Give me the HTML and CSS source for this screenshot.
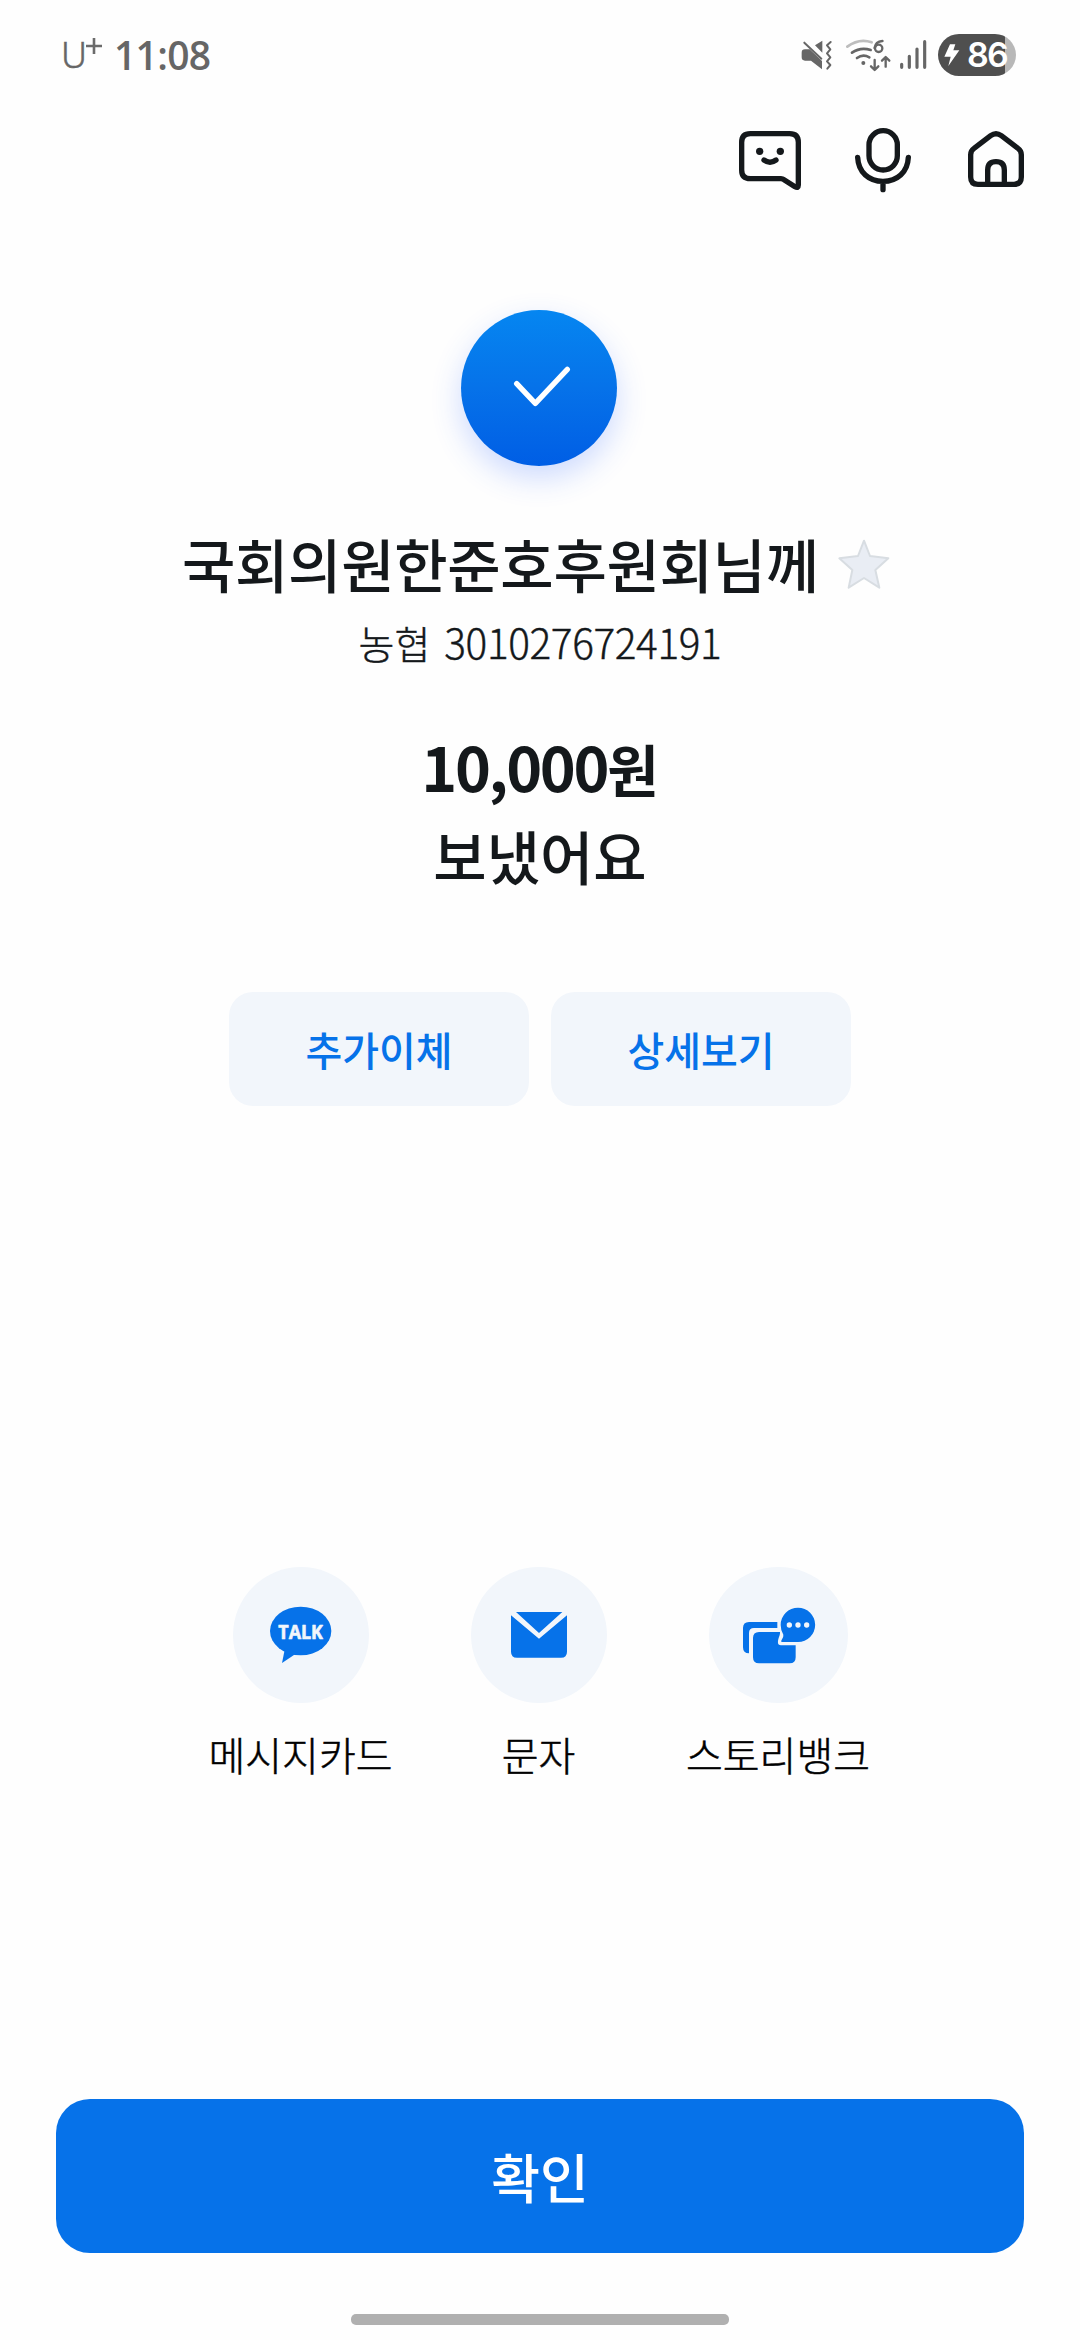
FILE: index.html
```html
<!DOCTYPE html>
<html lang="ko">
<head>
<meta charset="utf-8">
<title>이체 완료</title>
<link rel="stylesheet" href="styles.css">
</head>
<body>
<div class="screen">
  <div class="status">
    <div class="status-left"><span class="carrier">U</span><svg class="plus" viewBox="0 0 16 16"><path d="M8 0V16M0 8H16" fill="none" stroke="#6b6b6b" stroke-width="2.6"/></svg><span class="clock">11:08</span></div>
    <div class="status-right">
      <svg class="mute" viewBox="60 39 96 132"><path d="M62 98Q62 88 72 88H86L123 123V148L90 122H72Q62 122 62 112ZM102 76L124 62V98Z" fill="#666"/><path d="M70 68L121 116M149 66L138 76L148 88L138 100L148 112L138 124L148 135L139 146" fill="none" stroke="#666" stroke-width="6" stroke-linecap="round" stroke-linejoin="round"/></svg>
      <svg class="wifi" viewBox="192 39 138 132"><path d="M199 80Q234 54 272 67" fill="none" stroke="#bdbdbd" stroke-width="8" stroke-linecap="round"/><path d="M213 98Q239 80 269 90M228 114Q246 101 265 112M304 63Q284 64 281 84" fill="none" stroke="#666" stroke-width="8" stroke-linecap="round"/><circle cx="293" cy="85" r="11" fill="none" stroke="#666" stroke-width="7"/><circle cx="247" cy="129" r="6" fill="#666"/><path d="M281 120V148M270 139L281 150L292 139M314 140V112M303 122L314 111L325 122" fill="none" stroke="#666" stroke-width="7" stroke-linecap="round" stroke-linejoin="round"/></svg>
      <svg class="signal" viewBox="354 39 87 132"><path d="M362 133V142M385 109V142M408 87V142M431 65V142" fill="none" stroke="#666" stroke-width="9.500" stroke-linecap="round"/></svg>
      <div class="battery"><svg class="bolt" viewBox="489 72 48 66"><path d="M507 73H523L517 91H535L502 138L509 110H490Z" fill="#fff"/></svg><span class="level">86</span></div>
    </div>
  </div>

  <div class="toolbar">
    <svg class="chat" viewBox="54 51 192 201"><g fill="none" stroke="#14181b" stroke-width="16" stroke-linejoin="round" stroke-linecap="round"><path d="M91 71H209Q235 71 235 97V225Q235 236 225 230L192 209Q188 206 183 206H91Q65 206 65 180V97Q65 71 91 71Z"/><path d="M132 150Q150 163 168 150"/></g><circle cx="119" cy="124" r="11" fill="#14181b"/><circle cx="181" cy="124" r="11" fill="#14181b"/></svg>
    <svg class="mic" viewBox="402 51 174 201"><g fill="none" stroke="#14181b" stroke-width="16" stroke-linecap="round"><rect x="447" y="62" width="85" height="118" rx="42.500"/><path d="M413 142C415 187 447 214 489 214S563 187 565 142M489 214V239"/></g></svg>
    <svg class="home" viewBox="741 51 174 201"><path d="M812 77Q828 65 844 77L894 115Q904 122 904 134V201Q904 223 882 223H774Q752 223 752 201V134Q752 122 762 115ZM803 222V180Q803 155 828 155Q853 155 853 180V222" fill="none" stroke="#14181b" stroke-width="16" stroke-linejoin="round"/></svg>
  </div>

  <div class="done"><svg viewBox="93 60 468 468"><path d="M260 281L316 340L412 238" fill="none" stroke="#fff" stroke-width="16" stroke-linecap="round" stroke-linejoin="round"/></svg></div>

  <div class="recipient">
    <h1 class="name">국회의원한준호후원회님께</h1>
    <svg class="star" viewBox="861 54 162 156"><path d="M942 62L960 108L1015 115L976 150L988 203L942 174L896 203L907 150L868 115L924 108Z" fill="#e9edf4" stroke="#d8dde2" stroke-width="6" stroke-linejoin="round"/></svg>
  </div>
  <p class="account"><span class="bank">농협</span> <span class="number">3010276724191</span></p>
  <p class="amount"><span class="digits">10,000</span>원</p>
  <p class="sent">보냈어요</p>

  <div class="buttons">
    <button class="sub">추가이체</button>
    <button class="sub">상세보기</button>
  </div>

  <div class="shares">
    <div class="share">
      <svg class="disc" viewBox="129 51 408 408"><ellipse cx="332" cy="243" rx="92" ry="73" fill="#0672e9"/><path d="M285 295L276 339L322 308Z" fill="#0672e9"/><text x="265" y="267" textLength="134" lengthAdjust="spacingAndGlyphs" class="talk">TALK</text></svg>
      <span class="label">메시지카드</span>
    </div>
    <div class="share">
      <svg class="disc" viewBox="843 51 408 408"><path d="M978 186H1117L1047 249ZM963 196L1047 266L1131 196V305Q1131 323 1113 323H981Q963 323 963 305Z" fill="#0672e9"/></svg>
      <span class="label">문자</span>
    </div>
    <div class="share last">
      <svg class="disc wide" viewBox="147 51 417 408"><path d="M352 216H267Q249 216 249 234V292Q249 310 267 310V249Q267 234 282 234H352ZM297 246H360Q361 253 356 264Q349 286 363 286H407V322Q407 340 389 340H297Q279 340 279 322V264Q279 246 297 246Z" fill="#0672e9"/><path d="M414 173A51 51 0 0 1 414 276H366Q361 276 366 268Q371 261 370 254Q362 241 362 225A52 52 0 0 1 414 173Z" fill="#0672e9"/><circle cx="388" cy="225" r="8" fill="#f2f6fb"/><circle cx="414" cy="225" r="8" fill="#f2f6fb"/><circle cx="440" cy="225" r="8" fill="#f2f6fb"/></svg>
      <span class="label">스토리뱅크</span>
    </div>
  </div>

  <button class="confirm">확인</button>
  <div class="handle"></div>
</div>
</body>
</html>
```
FILE: styles.css
```css
* { box-sizing: border-box; margin: 0; padding: 0; }
body { background: #fefefe; }
button { border: 0; font: inherit; display: block; }
svg { display: block; flex: none; }
.screen {
  width: 1080px; height: 2340px; overflow: hidden;
  display: flex; flex-direction: column; align-items: center;
  font-family: "Noto Sans CJK KR", "Noto Sans", sans-serif;
  color: #14181b; white-space: nowrap;
}
.status {
  width: 100%; height: 127px; padding: 33px 64px 0 61px;
  display: flex; justify-content: space-between; align-items: flex-start;
  color: #666;
}
.status-left { display: flex; height: 44px; line-height: 44px; font-family: "Open Sans", sans-serif; }
.carrier { font-family: "Noto Sans", sans-serif; font-weight: 300; font-size: 36px; width: 25px; -webkit-text-stroke: 0.5px #666; }
.plus { width: 16px; height: 16px; margin-top: 5px; }
.clock { font-weight: 600; font-size: 39px; margin-left: 12px; letter-spacing: -0.7px; }
.status-right { display: flex; height: 44px; }
.mute { width: 32px; height: 44px; margin-right: 12px; }
.wifi { width: 46px; height: 44px; margin-right: 8px; }
.signal { width: 29px; height: 44px; margin-right: 10px; }
.battery {
  width: 78px; height: 42px; margin: 1px 0 0; border-radius: 21px;
  background: linear-gradient(90deg, #4f4f4f 67px, #b8b8b8 67px);
  display: flex; align-items: center; padding-left: 6px; color: #fff;
}
.bolt { width: 16px; height: 22px; }
.level { font: 600 34px/42px "Inter", sans-serif; margin-left: 7px; letter-spacing: -1.8px; }
.toolbar { width: 100%; height: 183px; padding-right: 55px; display: flex; justify-content: flex-end; }
.chat { width: 64px; height: 67px; margin-right: 52px; }
.mic { width: 58px; height: 67px; margin-right: 55px; }
.home { width: 58px; height: 67px; }
.done {
  width: 156px; height: 156px; flex: none; border-radius: 50%; margin-right: 2px;
  background: linear-gradient(#0586f1, #0672e9 50%, #005ee5);
  box-shadow: 0 12px 30px rgba(50, 105, 255, .24);
}
.recipient { display: flex; width: 100%; padding-left: 182px; margin-top: 56px; height: 82px; align-items: flex-start; }
.name { font-size: 58px; font-weight: 500; line-height: 82px; width: 655px; letter-spacing: -0.3px; }
.star { width: 54px; height: 52px; margin-top: 16px; }
.account { font-size: 39px; font-weight: 300; line-height: 56px; height: 56px; margin-top: 10px; -webkit-text-stroke: 0.4px #14181b; }
.number { font-size: 40.5px; letter-spacing: -0.35px; margin-left: 3px; }
.amount { font-size: 56px; font-weight: 700; line-height: 84px; height: 84px; margin-top: 54px; }
.digits { font-size: 61px; letter-spacing: -2.3px; }
.sent { font-size: 58px; font-weight: 500; line-height: 84px; height: 84px; margin-top: 5px; }
.buttons { display: flex; gap: 22px; margin-top: 95px; }
.sub { width: 300px; height: 114px; border-radius: 24px; background: #f2f6fb; color: #0672e9; font-size: 40px; font-weight: 500; line-height: 114px; }
.shares { display: flex; gap: 102px; width: 615px; margin-top: 461px; height: 532px; }
.share { width: 136px; flex: none; display: flex; flex-direction: column; align-items: center; }
.share.last { width: 139px; }
.disc { width: 136px; height: 136px; border-radius: 50%; background: #f2f6fb; }
.disc.wide { width: 139px; }
.talk { font: 700 60px "Open Sans", sans-serif; fill: #f2f6fb; stroke: #f2f6fb; stroke-width: 2; stroke-linejoin: round; }
.label { color: #000; font-size: 40px; font-weight: 300; line-height: 58px; margin-top: 22px; -webkit-text-stroke: 0.5px #000; }
.confirm { width: 968px; height: 154px; flex: none; border-radius: 34px; background: #0672e9; color: #fff; font-size: 53px; font-weight: 500; line-height: 154px; }
.handle { width: 378px; height: 11px; flex: none; border-radius: 5px; background: #b0b0b0; margin-top: 61px; }
```
